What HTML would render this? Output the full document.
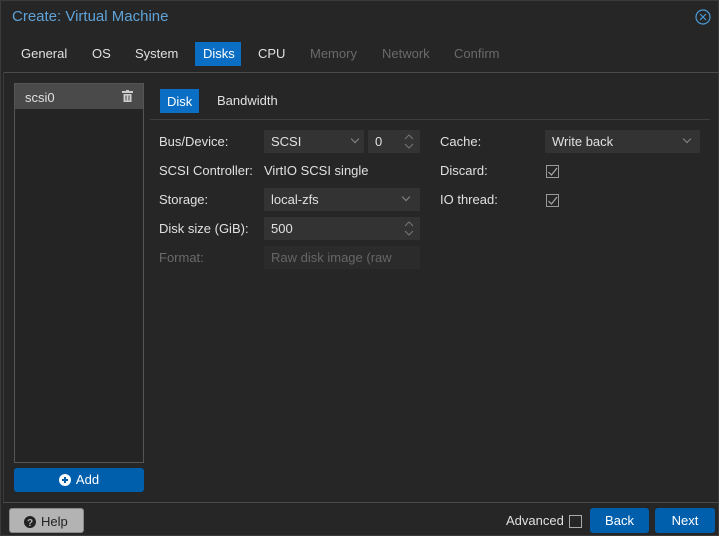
<!DOCTYPE html>
<html><head><style>
*{box-sizing:border-box;margin:0;padding:0}
body{width:719px;height:536px;background:#262626;font-family:"Liberation Sans",sans-serif;font-size:13px;color:#e0e0e0;position:relative;overflow:hidden}
.a{position:absolute}
.t{white-space:nowrap}
.f{position:absolute;background:#333;height:23px;padding:4px 7px;color:#e0e0e0}
.dis{color:#6a6a6a}
.chev{position:absolute;width:6px;height:6px;border-right:1px solid #888;border-bottom:1px solid #888;transform:rotate(45deg)}
.cb{position:absolute;width:13px;height:13px;border:1px solid #999}
.btn{position:absolute;background:#005fad;color:#fff;border-radius:3px;text-align:center}
</style></head><body>
<div class="a" style="left:0;top:0;width:719px;height:536px;border:1px solid #3a3a3a"></div>
<div class="a t" style="left:12px;top:8px;font-size:15px;color:#5fa3d8">Create: Virtual Machine</div>
<svg class="a" style="left:695px;top:9px" width="16" height="16" viewBox="0 0 16 16"><circle cx="8" cy="8" r="7" fill="none" stroke="#4a9ad4" stroke-width="1.2"/><path d="M5 5L11 11M11 5L5 11" stroke="#4a9ad4" stroke-width="1.2"/></svg>
<div class="a t" style="left:21px;top:46px">General</div>
<div class="a t" style="left:92px;top:46px">OS</div>
<div class="a t" style="left:135px;top:46px">System</div>
<div class="a t" style="left:195px;top:42px;width:46px;height:24px;background:#0a6fc4;color:#fff;padding:4px 0 0 8px">Disks</div>
<div class="a t" style="left:258px;top:46px">CPU</div>
<div class="a t dis" style="left:310px;top:46px">Memory</div>
<div class="a t dis" style="left:382px;top:46px">Network</div>
<div class="a t dis" style="left:454px;top:46px">Confirm</div>
<div class="a" style="left:3px;top:72px;width:716px;height:1px;background:#4a4a4a"></div>
<div class="a" style="left:3px;top:72px;width:1px;height:430px;background:#3a3a3a"></div>
<div class="a" style="left:14px;top:83px;width:130px;height:380px;border:1px solid #555;background:#242424"></div>
<div class="a" style="left:15px;top:84px;width:128px;height:25px;background:#4a4a4a"></div>
<div class="a t" style="left:25px;top:90px">scsi0</div>
<svg class="a" style="left:122px;top:90px" width="11" height="12" viewBox="0 0 11 12"><rect x="0" y="1" width="11" height="2" fill="#ccc"/><rect x="4" y="0" width="3" height="2" fill="#ccc"/><path d="M1.5 4H9.5V12H1.5Z" fill="#ccc"/><path d="M4 5.5V10.5M7 5.5V10.5" stroke="#4a4a4a"/></svg>
<div class="btn" style="left:14px;top:468px;width:130px;height:24px;padding-top:4px">
<svg style="vertical-align:-2px;margin-right:5px" width="12" height="12" viewBox="0 0 12 12"><circle cx="6" cy="6" r="6" fill="#fff"/><path d="M6 3V9M3 6H9" stroke="#005fad" stroke-width="2"/></svg>Add</div>
<div class="a t" style="left:160px;top:89px;width:39px;height:24px;background:#0a6fc4;color:#fff;padding:5px 0 0 7px">Disk</div>
<div class="a t" style="left:217px;top:93px">Bandwidth</div>
<div class="a" style="left:150px;top:119px;width:560px;height:1px;background:#3e3e3e"></div>
<div class="a t" style="left:159px;top:134px">Bus/Device:</div>
<div class="f" style="left:264px;top:130px;width:100px">SCSI</div><div class="chev" style="left:352px;top:136px"></div>
<div class="f" style="left:368px;top:130px;width:52px">0</div>
<svg class="a" style="left:403px;top:133px" width="12" height="18"><path d="M2 6L6 2L10 6M2 11L6 15L10 11" fill="none" stroke="#777"/></svg>
<div class="a t" style="left:159px;top:163px">SCSI Controller:</div>
<div class="a t" style="left:264px;top:163px">VirtIO SCSI single</div>
<div class="a t" style="left:159px;top:192px">Storage:</div>
<div class="f" style="left:264px;top:188px;width:156px">local-zfs</div><div class="chev" style="left:403px;top:194px"></div>
<div class="a t" style="left:159px;top:221px">Disk size (GiB):</div>
<div class="f" style="left:264px;top:217px;width:156px">500</div>
<svg class="a" style="left:403px;top:220px" width="12" height="18"><path d="M2 6L6 2L10 6M2 11L6 15L10 11" fill="none" stroke="#777"/></svg>
<div class="a t dis" style="left:159px;top:250px">Format:</div>
<div class="f dis" style="left:264px;top:246px;width:156px;background:#2b2b2b;color:#666">Raw disk image (raw</div>
<div class="a t" style="left:440px;top:134px">Cache:</div>
<div class="f" style="left:545px;top:130px;width:155px">Write back</div><div class="chev" style="left:684px;top:136px"></div>
<div class="a t" style="left:440px;top:163px">Discard:</div>
<div class="cb" style="left:546px;top:165px"></div>
<svg class="a" style="left:546px;top:165px" width="13" height="13"><path d="M2.5 7L5.5 10L11 3" fill="none" stroke="#aaa" stroke-width="1.2"/></svg>
<div class="a t" style="left:440px;top:192px">IO thread:</div>
<div class="cb" style="left:546px;top:194px"></div>
<svg class="a" style="left:546px;top:194px" width="13" height="13"><path d="M2.5 7L5.5 10L11 3" fill="none" stroke="#aaa" stroke-width="1.2"/></svg>
<div class="a" style="left:3px;top:502px;width:716px;height:1px;background:#4a4a4a"></div>
<div class="a" style="left:9px;top:508px;width:75px;height:25px;background:#b3b3b3;border:1px solid #888;border-radius:3px;color:#222;padding:5px 0 0 14px">
<svg style="vertical-align:-2px;margin-right:5px" width="12" height="12" viewBox="0 0 12 12"><circle cx="6" cy="6" r="6" fill="#222"/><text x="6" y="10" font-size="10" font-weight="bold" text-anchor="middle" fill="#b3b3b3" font-family="Liberation Sans">?</text></svg>Help</div>
<div class="a t" style="left:506px;top:513px">Advanced</div>
<div class="cb" style="left:569px;top:515px;border-color:#aaa"></div>
<div class="btn" style="left:590px;top:508px;width:59px;height:25px;padding-top:5px">Back</div>
<div class="btn" style="left:655px;top:508px;width:60px;height:25px;padding-top:5px">Next</div>
</body></html>
